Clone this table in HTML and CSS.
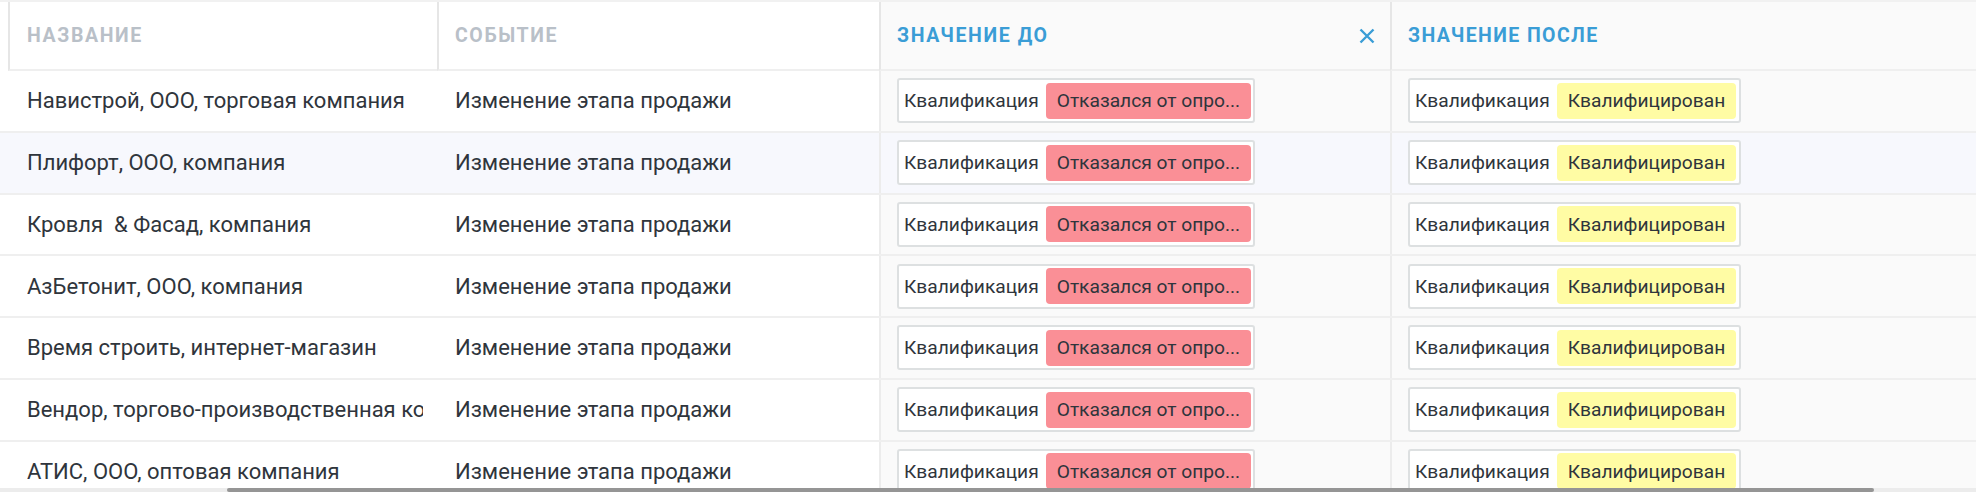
FILE: index.html
```html
<!DOCTYPE html>
<html lang="ru">

<head>
  <meta charset="UTF-8">
  <meta name="viewport" content="width=device-width, initial-scale=1.0">
  <title>История изменений</title>
  <link rel="stylesheet" href="styles.css">
</head>

<body>
  <div class="grid">
    <div class="th th-name">Название</div>
    <div class="th th-event">Событие</div>
    <div class="th th-active th-before">
      <span>Значение до</span>
      <svg class="clear" width="16" height="16" viewBox="0 0 16 16">
        <path d="M1.5 1.5 L14.5 14.5 M14.5 1.5 L1.5 14.5" />
      </svg>
    </div>
    <div class="th th-active th-after">Значение после</div>
  </div>

  <div class="grid row">
    <div class="td td-name"><span>Навистрой, ООО, торговая компания</span></div>
    <div class="td td-event">Изменение этапа продажи</div>
    <div class="td td-val">
      <div class="stage"><span>Квалификация</span><span class="tag tag-red">Отказался от опро...</span></div>
    </div>
    <div class="td td-val td-after">
      <div class="stage"><span>Квалификация</span><span class="tag tag-yellow">Квалифицирован</span></div>
    </div>
  </div>

  <div class="grid row hover">
    <div class="td td-name"><span>Плифорт, ООО, компания</span></div>
    <div class="td td-event">Изменение этапа продажи</div>
    <div class="td td-val">
      <div class="stage"><span>Квалификация</span><span class="tag tag-red">Отказался от опро...</span></div>
    </div>
    <div class="td td-val td-after">
      <div class="stage"><span>Квалификация</span><span class="tag tag-yellow">Квалифицирован</span></div>
    </div>
  </div>

  <div class="grid row">
    <div class="td td-name"><span>Кровля &nbsp;&amp; Фасад, компания</span></div>
    <div class="td td-event">Изменение этапа продажи</div>
    <div class="td td-val">
      <div class="stage"><span>Квалификация</span><span class="tag tag-red">Отказался от опро...</span></div>
    </div>
    <div class="td td-val td-after">
      <div class="stage"><span>Квалификация</span><span class="tag tag-yellow">Квалифицирован</span></div>
    </div>
  </div>

  <div class="grid row">
    <div class="td td-name"><span>АзБетонит, ООО, компания</span></div>
    <div class="td td-event">Изменение этапа продажи</div>
    <div class="td td-val">
      <div class="stage"><span>Квалификация</span><span class="tag tag-red">Отказался от опро...</span></div>
    </div>
    <div class="td td-val td-after">
      <div class="stage"><span>Квалификация</span><span class="tag tag-yellow">Квалифицирован</span></div>
    </div>
  </div>

  <div class="grid row">
    <div class="td td-name"><span>Время строить, интернет-магазин</span></div>
    <div class="td td-event">Изменение этапа продажи</div>
    <div class="td td-val">
      <div class="stage"><span>Квалификация</span><span class="tag tag-red">Отказался от опро...</span></div>
    </div>
    <div class="td td-val td-after">
      <div class="stage"><span>Квалификация</span><span class="tag tag-yellow">Квалифицирован</span></div>
    </div>
  </div>

  <div class="grid row">
    <div class="td td-name"><span>Вендор, торгово-производственная компания</span></div>
    <div class="td td-event">Изменение этапа продажи</div>
    <div class="td td-val">
      <div class="stage"><span>Квалификация</span><span class="tag tag-red">Отказался от опро...</span></div>
    </div>
    <div class="td td-val td-after">
      <div class="stage"><span>Квалификация</span><span class="tag tag-yellow">Квалифицирован</span></div>
    </div>
  </div>

  <div class="grid row">
    <div class="td td-name"><span>АТИС, ООО, оптовая компания</span></div>
    <div class="td td-event">Изменение этапа продажи</div>
    <div class="td td-val">
      <div class="stage"><span>Квалификация</span><span class="tag tag-red">Отказался от опро...</span></div>
    </div>
    <div class="td td-val td-after">
      <div class="stage"><span>Квалификация</span><span class="tag tag-yellow">Квалифицирован</span></div>
    </div>
  </div>

  <div class="scrollbar"><div class="thumb"></div></div>
</body>

</html>
```

FILE: styles.css
```css
:root {
  --line: #efefef;
  --text: #2f353c;
  --blue: #3a9dd6;
  --muted: #b9c0c8;
}

body {
  margin: 0;
  background: #fff;
  font-family: Roboto, "Noto Sans", sans-serif;
  color: var(--text);
  border-top: 2px solid #f1f1f1;
  overflow: hidden;
  height: 490px;
}

.grid {
  display: grid;
  grid-template-columns: 437px 442px 511px 1fr;
}

/* header */
.th {
  height: 67px;
  display: flex;
  align-items: center;
  font-size: 19.5px;
  font-weight: 700;
  letter-spacing: 1.6px;
  text-transform: uppercase;
  color: var(--muted);
  border-bottom: 2px solid var(--line);
  border-left: 2px solid #e6e6e6;
  padding-left: 16px;
}

.th-name {
  margin-left: 8px;
  padding-left: 17px;
}

.th-active {
  color: var(--blue);
  background: #fafafa;
}

.th-before {
  justify-content: space-between;
  padding-right: 15px;
}

.th-after {
  letter-spacing: 1.4px;
}

.clear {
  stroke: var(--blue);
  stroke-width: 2.4;
  fill: none;
}

/* rows */
.row {
  height: 61.75px;
  box-sizing: border-box;
  border-bottom: 2px solid var(--line);
}

.td {
  display: flex;
  align-items: center;
  font-size: 22px;
  white-space: nowrap;
  overflow: hidden;
}

.td-name {
  padding-left: 27px;
  padding-right: 14px;
}

.td-name span {
  min-width: 0;
  overflow: hidden;
}

.td-event {
  padding-left: 18px;
}

.td-val {
  background: #fafafa;
  border-left: 2px solid #ececec;
  padding-left: 16px;
}

.hover .td {
  background: #f7f8fd;
}

.stage {
  display: flex;
  align-items: center;
  gap: 7px;
  height: 45px;
  box-sizing: border-box;
  padding: 0 2px 0 5px;
  background: #fff;
  border: 2px solid #dde0e1;
  border-radius: 3px;
  font-size: 19.2px;
}

.td-after .stage {
  padding-right: 3px;
}

.tag {
  height: 36px;
  display: flex;
  align-items: center;
  border-radius: 4px;
  padding: 0 11px 0 11px;
}

.tag-red {
  background: #fa8f96;
}

.tag-yellow {
  background: #fffca4;
  padding: 0 11px;
}

/* horizontal scrollbar over the table */
.scrollbar {
  position: fixed;
  left: 0;
  right: 0;
  bottom: 0;
  height: 4px;
  background: #ececec;
}

.thumb {
  margin-left: 227px;
  width: 1647px;
  height: 4px;
  border-radius: 2px;
  background: #959595;
}
```
